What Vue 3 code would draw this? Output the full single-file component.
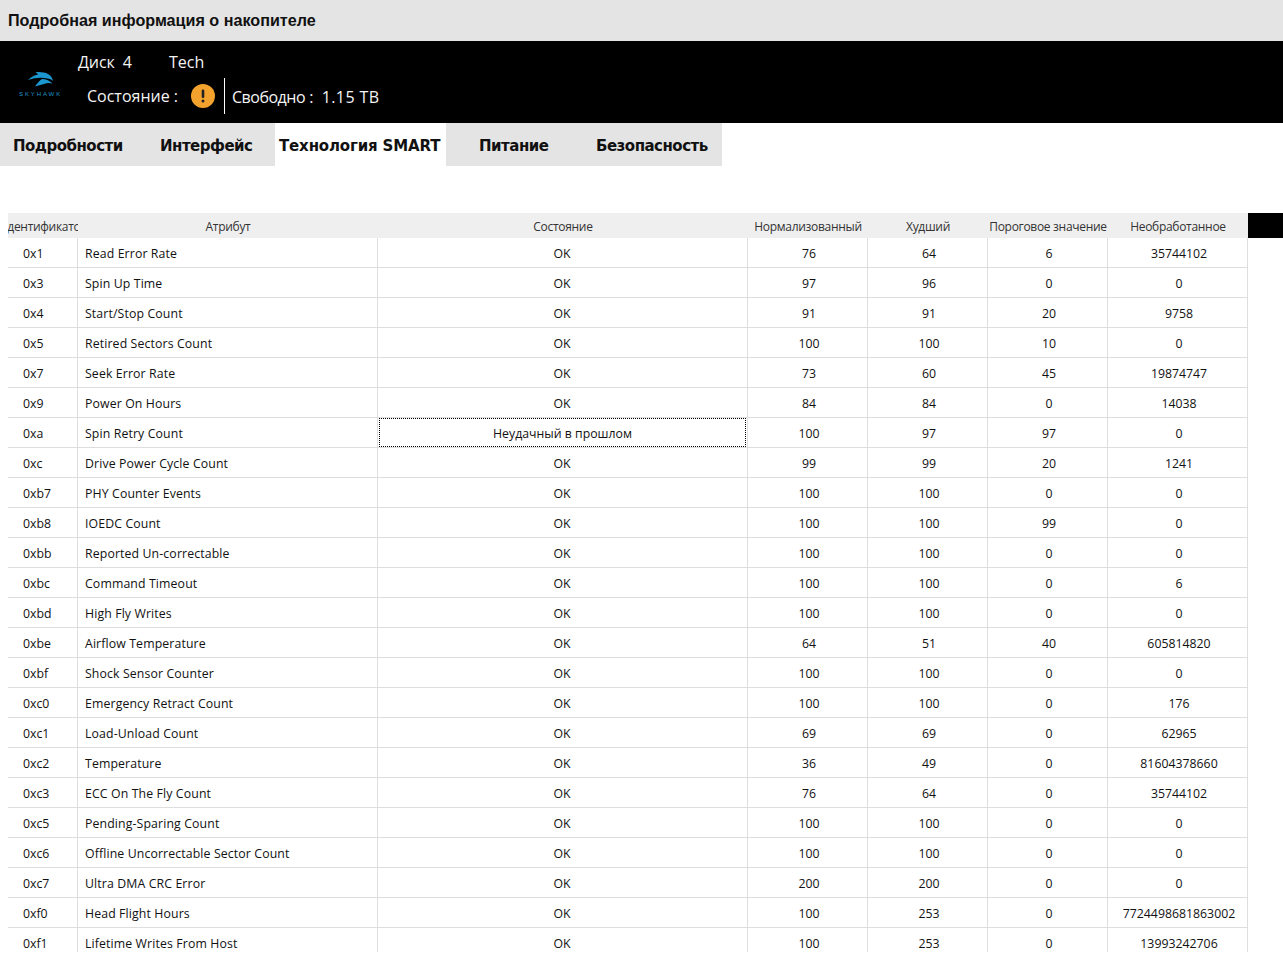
<script setup>
const attributes = [
  ['0x1', 'Read Error Rate', 'OK', 76, 64, 6, '35744102'],
  ['0x3', 'Spin Up Time', 'OK', 97, 96, 0, '0'],
  ['0x4', 'Start/Stop Count', 'OK', 91, 91, 20, '9758'],
  ['0x5', 'Retired Sectors Count', 'OK', 100, 100, 10, '0'],
  ['0x7', 'Seek Error Rate', 'OK', 73, 60, 45, '19874747'],
  ['0x9', 'Power On Hours', 'OK', 84, 84, 0, '14038'],
  ['0xa', 'Spin Retry Count', 'Неудачный в прошлом', 100, 97, 97, '0'],
  ['0xc', 'Drive Power Cycle Count', 'OK', 99, 99, 20, '1241'],
  ['0xb7', 'PHY Counter Events', 'OK', 100, 100, 0, '0'],
  ['0xb8', 'IOEDC Count', 'OK', 100, 100, 99, '0'],
  ['0xbb', 'Reported Un-correctable', 'OK', 100, 100, 0, '0'],
  ['0xbc', 'Command Timeout', 'OK', 100, 100, 0, '6'],
  ['0xbd', 'High Fly Writes', 'OK', 100, 100, 0, '0'],
  ['0xbe', 'Airflow Temperature', 'OK', 64, 51, 40, '605814820'],
  ['0xbf', 'Shock Sensor Counter', 'OK', 100, 100, 0, '0'],
  ['0xc0', 'Emergency Retract Count', 'OK', 100, 100, 0, '176'],
  ['0xc1', 'Load-Unload Count', 'OK', 69, 69, 0, '62965'],
  ['0xc2', 'Temperature', 'OK', 36, 49, 0, '81604378660'],
  ['0xc3', 'ECC On The Fly Count', 'OK', 76, 64, 0, '35744102'],
  ['0xc5', 'Pending-Sparing Count', 'OK', 100, 100, 0, '0'],
  ['0xc6', 'Offline Uncorrectable Sector Count', 'OK', 100, 100, 0, '0'],
  ['0xc7', 'Ultra DMA CRC Error', 'OK', 200, 200, 0, '0'],
  ['0xf0', 'Head Flight Hours', 'OK', 100, 253, 0, '7724498681863002'],
  ['0xf1', 'Lifetime Writes From Host', 'OK', 100, 253, 0, '13993242706'],
]
const tabs = ['Подробности', 'Интерфейс', 'Технология SMART', 'Питание', 'Безопасность']
const heads = ['Идентификатор', 'Атрибут', 'Состояние', 'Нормализованный', 'Худший', 'Пороговое значение', 'Необработанное']
</script>

<template>
  <div class="page">
    <header class="title">Подробная информация о накопителе</header>
    <section class="drive">
      <div class="logo">
        <svg width="26" height="15" viewBox="0 0 26 15">
          <path d="M0 8 C3 5 6 3.5 10 2.5 C9.5 1.5 8.5 .8 7.5 .3 C12 -.3 17 .5 20 2 C22.5 3.2 24.5 6 25 9 C23.5 7.5 21.5 6.6 19.5 6.4 C14 5 7 5.5 0 8 Z" fill="#1b96cf" />
          <path d="M7 14.5 C9 11.5 11 9 14 7 C18 7 22 9 24.5 11.5 C21.5 10.5 18.5 11 16 12 C13 13 10 13.5 7 14.5 Z" fill="#1b96cf" />
        </svg>
        <span class="brand">SKYHAWK</span>
      </div>
      <div class="info">
        <div class="line-one"><span class="disk">Диск&nbsp; 4</span><span>Tech</span></div>
        <div class="line-two">
          <span class="state">Состояние&nbsp;:</span>
          <svg class="warn" width="24" height="24" viewBox="0 0 24 24">
            <circle cx="12" cy="12" r="12" fill="#f3a22d" />
            <rect x="10.7" y="5.5" width="2.6" height="8.5" rx="1.2" fill="#222" />
            <circle cx="12" cy="17" r="1.5" fill="#222" />
          </svg>
          <span class="free"><span class="free-label">Свободно</span> :&nbsp; <span class="free-value">1.15 TB</span></span>
        </div>
      </div>
    </section>
    <nav class="tabs">
      <div v-for="(t, i) in tabs" :key="t" class="tab" :class="[`tab-${i}`, { active: i === 2 }]">{{ t }}</div>
    </nav>
    <div class="table">
      <div class="head-row">
        <div class="cells head">
          <div v-for="h in heads" :key="h" class="hcell"><span>{{ h }}</span></div>
        </div>
        <div class="filler"></div>
      </div>
      <div class="body">
        <div v-for="a in attributes" :key="a[0]" class="cells row">
          <div class="cell id">{{ a[0] }}</div>
          <div class="cell name">{{ a[1] }}</div>
          <div class="cell status"><span :class="{ focus: a[2] !== 'OK' }">{{ a[2] }}</span></div>
          <div class="cell num">{{ a[3] }}</div>
          <div class="cell num">{{ a[4] }}</div>
          <div class="cell num">{{ a[5] }}</div>
          <div class="cell num">{{ a[6] }}</div>
        </div>
      </div>
    </div>
  </div>
</template>

<style scoped>
.page {
  width: 1283px;
  height: 957px;
  overflow: hidden;
  background: #fff;
  color: #111;
  font-family: "Open Sans", "Noto Sans", sans-serif;
}
.title {
  height: 41px;
  box-sizing: border-box;
  padding: 10px 8px 0;
  background: #e4e4e4;
  color: #111;
  font: bold 16.15px/20px "Liberation Sans", sans-serif;
}
.drive {
  display: flex;
  height: 82px;
  background: #000;
  color: #f4f4f4;
}
.logo {
  width: 78px;
  box-sizing: border-box;
  padding: 31px 0 0 19px;
  display: flex;
  flex-direction: column;
  gap: 4px;
}
.logo svg { margin-left: 9px; flex: none; }
.brand {
  font: 6px/7px "Liberation Sans", sans-serif;
  letter-spacing: 1.9px;
  color: #1b96cf;
  white-space: nowrap;
}
.info {
  font-size: 16px;
  line-height: 22px;
}
.line-one {
  display: flex;
  padding-top: 10px;
  height: 37px;
  box-sizing: border-box;
}
.disk { width: 91px; letter-spacing: -0.1px; }
.line-two {
  display: flex;
  align-items: center;
  height: 36px;
}
.state { margin-left: 9px; }
.warn { margin-left: 13px; }
.free {
  margin-left: 9px;
  padding-left: 7px;
  height: 36px;
  line-height: 38px;
  border-left: 1px solid #fff;
}
.free-label { letter-spacing: -0.5px; }
.free-value { letter-spacing: 0.4px; }
.tabs {
  display: flex;
  width: 722px;
  height: 43px;
  background: #e4e4e4;
}
.tab {
  box-sizing: border-box;
  font: bold 15px/46px "DejaVu Sans", sans-serif;
  color: #111;
  white-space: nowrap;
  letter-spacing: -0.5px;
}
.tab-0 { width: 160px; padding-left: 13px; }
.tab-1 { width: 115px; }
.tab-2 { width: 171px; padding-left: 4px; background: #fff; letter-spacing: -0.15px; }
.tab-3 { width: 150px; padding-left: 33px; }
.tab-4 { width: 126px; }
.table {
  margin-top: 47px;
  height: 739px;
  overflow: hidden;
}
.head-row { display: flex; height: 25px; }
.filler { flex: 1; background: #000; }
.cells {
  display: grid;
  grid-template-columns: 70px 300px 370px 120px 120px 120px 140px;
  width: 1240px;
  margin-left: 8px;
  font-size: 12.3px;
}
.head {
  background: #efefef;
  color: #333;
  font-size: 12px;
  letter-spacing: -0.3px;
}
.hcell {
  display: flex;
  justify-content: center;
  align-items: center;
  overflow: hidden;
  height: 25px;
  padding-top: 2px;
  box-sizing: border-box;
  white-space: nowrap;
}
.hcell span { flex: none; }
.row { height: 30px; }
.cell {
  box-sizing: border-box;
  border-right: 1px solid #dedede;
  border-bottom: 1px solid #dedede;
  height: 30px;
  line-height: 31px;
  white-space: nowrap;
  color: #111;
}
.id { padding-left: 15px; }
.name { padding-left: 7px; letter-spacing: 0.12px; }
.status { text-align: center; padding-right: 1px; }
.num { text-align: center; padding-left: 3px; }
.focus {
  display: block;
  height: 29px;
  line-height: 29px;
  margin: 0 0 0 1px;
  border: 1px dotted #000;
  box-sizing: border-box;
}
</style>
